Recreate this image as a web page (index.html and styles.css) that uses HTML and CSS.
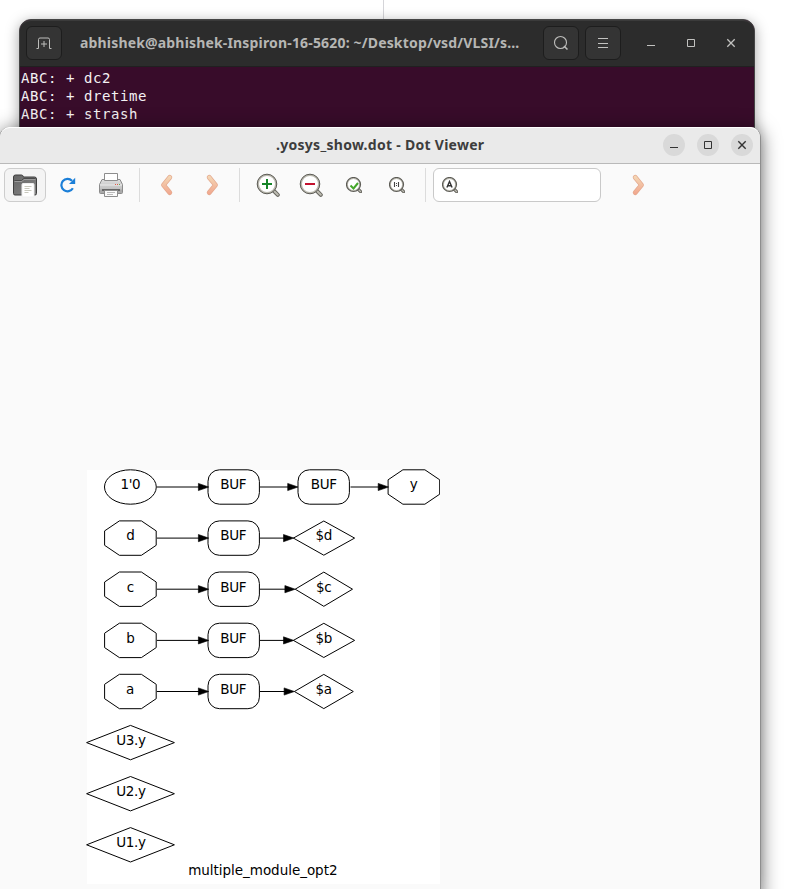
FILE: index.html
```html
<!DOCTYPE html>
<html lang="en">
<head>
<meta charset="utf-8">
<title>.yosys_show.dot - Dot Viewer</title>
<link rel="stylesheet" href="styles.css">
</head>
<body>
<div class="page-line"></div>

<section class="window terminal">
  <header class="term-header">
    <button class="term-btn" aria-label="New tab">
      <svg width="16" height="16" viewBox="0 0 16 16" fill="none" stroke="#bdbdbb"><path d="M.5 13.500h2v-9q0-1.500 1.500-1.500h8q1.500 0 1.500 1.500v9h2M8 6v6M5 9h6"/></svg>
    </button>
    <h1 class="term-title">abhishek@abhishek-Inspiron-16-5620: ~/Desktop/vsd/VLSI/s…</h1>
    <button class="term-btn" aria-label="Search">
      <svg width="16" height="16" viewBox="0 0 16 16" fill="none" stroke="#bdbdbb"><circle cx="7.500" cy="7.500" r="6" stroke-width="1.100"/><path d="M11 11l3.500 3.500" stroke-width="1.500"/></svg>
    </button>
    <button class="term-btn" aria-label="Menu">
      <svg width="16" height="16" viewBox="0 0 16 16" stroke="#c2c2c0"><path d="M3 3.500h10M3 8.500h10M3 12.500h10"/></svg>
    </button>
    <div class="term-controls">
      <svg width="16" height="16" viewBox="0 0 16 16" stroke="#c2c2c0"><path d="M4 10.500h8"/></svg>
      <svg width="16" height="16" viewBox="0 0 16 16" stroke="#c2c2c0" fill="none"><path d="M4.500 4.500h7v7h-7z"/></svg>
      <svg width="16" height="16" viewBox="0 0 16 16" stroke="#c2c2c0" stroke-width="1.300"><path d="M4.300 4.300l7.400 7.400M11.700 4.300l-7.400 7.400"/></svg>
    </div>
  </header>
  <pre class="term-output">ABC: + dc2
ABC: + dretime
ABC: + strash</pre>
</section>

<section class="window viewer">
  <header class="viewer-header">
    <h2 class="viewer-title">.yosys_show.dot - Dot Viewer</h2>
    <div class="viewer-controls">
      <span class="round"><svg width="16" height="16" viewBox="0 0 16 16" stroke="#333"><path d="M4 10.500h8"/></svg></span>
      <span class="round"><svg width="16" height="16" viewBox="0 0 16 16" stroke="#333" fill="none"><path d="M4.500 4.500h7v7h-7z"/></svg></span>
      <span class="round"><svg width="16" height="16" viewBox="0 0 16 16" stroke="#333" stroke-width="1.400"><path d="M4.300 4.300l7.400 7.400M11.700 4.300l-7.400 7.400"/></svg></span>
    </div>
  </header>

  <svg class="defs" width="0" height="0">
    <defs>
      <linearGradient id="peach" gradientUnits="userSpaceOnUse" x1="0" y1="2" x2="0" y2="22"><stop offset="0" stop-color="#f4dbb8"/><stop offset="1" stop-color="#f1a48c"/></linearGradient>
      <linearGradient id="folder" x1="0" y1="0" x2="1" y2="1"><stop offset="0" stop-color="#666"/><stop offset="1" stop-color="#858585"/></linearGradient>
      <linearGradient id="metal" x1="0" y1="0" x2="0" y2="1"><stop offset="0" stop-color="#dedede"/><stop offset="1" stop-color="#b5b5b5"/></linearGradient>
      <symbol id="right" viewBox="0 0 24 24"><path d="M9.200 4.400L15.500 12L9.200 19.600" fill="none" stroke="#e4a88d" stroke-width="4.800" stroke-linecap="round" stroke-linejoin="round"/><path d="M9.200 4.400L15.500 12L9.200 19.600" fill="none" stroke="url(#peach)" stroke-width="3.400" stroke-linecap="round" stroke-linejoin="round"/></symbol>
      <symbol id="lens-large" viewBox="0 0 24 24"><path d="M17.500 17.500l4.300 4.300" stroke="#66655e" stroke-width="4" stroke-linecap="round"/><path d="M17.500 17.500l4.300 4.300" stroke="#bdbcb2" stroke-width="2" stroke-linecap="round"/><circle cx="11" cy="11" r="9" fill="#fff" stroke="#b9b8ae" stroke-width="2"/><circle cx="11" cy="11" r="9.800" fill="none" stroke="#5d5c56" stroke-width="1"/></symbol>
      <symbol id="lens-small" viewBox="0 0 16 16"><path d="M12 12l2.600 2.600" stroke="#66655e" stroke-width="3.200" stroke-linecap="round"/><path d="M12 12l2.600 2.600" stroke="#bdbcb2" stroke-width="1.300" stroke-linecap="round"/><circle cx="7.500" cy="7.500" r="6.200" fill="#fff" stroke="#c0bfb5" stroke-width="1.300"/><circle cx="7.500" cy="7.500" r="7" fill="none" stroke="#5d5c56" stroke-width="1.200"/></symbol>
    </defs>
  </svg>

  <nav class="toolbar">
    <span class="tool raised">
      <svg width="26" height="26" viewBox="0 0 26 26"><path d="M1.500 21.500V5q0-2 2-2h6q1.500 0 2 2h11q2 0 2 2v14.500q0 1.500-1.500 1.500H3q-1.500 0-1.500-1.500z" fill="url(#folder)" stroke="#3f3f3f"/><path d="M2.500 9.500h7.500l2-2h11.500" fill="none" stroke="#9b9b9b"/><path d="M2.500 8.500h7l2-2h12" fill="none" stroke="#4b4b4b"/><path d="M11 11.500h10q1 0 1 1V25H10V12.500q0-1 1-1z" fill="#fff" stroke="#eee"/><path d="M12.500 14.500h7M12.500 16.500h5M12.500 18.500h7M12.500 20.500h4" stroke="#c8c8bd"/></svg>
    </span>
    <span class="tool">
      <svg width="16" height="16" viewBox="0 0 16 16"><path d="M12.900 11.300A6.200 6.200 0 1 1 12 3.700" fill="none" stroke="#1b7fd8" stroke-width="2.200"/><path d="M15.200.8V7H9z" fill="#1b7fd8"/></svg>
    </span>
    <span class="tool">
      <svg width="26" height="26" viewBox="0 0 26 26"><path d="M4 7.500h18l2.500 5v8q0 1-1 1h-21q-1 0-1-1v-8z" fill="url(#metal)" stroke="#8b8b8b"/><path d="M2 13h22" stroke="#ececec"/><path d="M2 17.500h22v3.500H2z" fill="#aaa"/><path d="M4 17h18v2H4z" fill="#666"/><path d="M6.500 1.500h13v7h-13z" fill="#fff" stroke="#8d8d8d"/><path d="M6.500 18.500h13v6h-13z" fill="#fafafa" stroke="#8d8d8d"/><path d="M9 20.500h8M9 22.500h6" stroke="#bbb"/><path d="M17 12.500h1M19 12.500h1" stroke="#e35b48"/><path d="M21 12.500h1" stroke="#67a94f"/></svg>
    </span>
    <i class="sep first"></i>
    <span class="tool"><svg class="flip" width="24" height="24"><use href="#right"/></svg></span>
    <span class="tool next"><svg width="24" height="24"><use href="#right"/></svg></span>
    <i class="sep second"></i>
    <span class="tool"><svg width="24" height="24" viewBox="0 0 24 24"><use href="#lens-large"/><path d="M6 11h10M11 6v10" stroke="#168529" stroke-width="2"/></svg></span>
    <span class="tool"><svg width="24" height="24" viewBox="0 0 24 24"><use href="#lens-large"/><path d="M6 11h10" stroke="#c4122f" stroke-width="2"/></svg></span>
    <span class="tool"><svg width="16" height="16" viewBox="0 0 16 16"><use href="#lens-small"/><path d="M4.500 8.500l3 3L12 6" fill="none" stroke="#45a82b" stroke-width="2"/></svg></span>
    <span class="tool"><svg width="16" height="16" viewBox="0 0 16 16"><use href="#lens-small"/><path d="M5.500 5v5M9.500 5v5" stroke="#444" stroke-width="1.100"/><path d="M7 6h1v1H7zM7 8h1v1H7z" fill="#444"/></svg></span>
    <i class="sep third"></i>
    <label class="entry">
      <svg width="16" height="16" viewBox="0 0 16 16"><use href="#lens-small"/><path d="M4.900 10.500L7.500 4.500 10.100 10.500M5.900 8.700h3.200" fill="none" stroke="#333" stroke-width="1.400"/></svg>
    </label>
    <span class="tool last"><svg width="24" height="24"><use href="#right"/></svg></span>
  </nav>

  <main class="canvas">
    <svg class="graph" width="354" height="416" viewBox="86 469 354 416">
      <defs>
        <path id="oct" d="M-11-17.200H11L25.800-7.200V7.200L11 17.200H-11L-25.800 7.200V-7.200z"/>
        <rect id="box" x="-25.700" y="-17.200" width="51.400" height="34.400" rx="11.500"/>
        <path id="wide" d="M-43.900 0L0-17.200 43.900 0 0 17.200z"/>
        <path id="tip" d="M0 0L-10.300-3.600V3.600z" fill="#000" stroke-width=".6"/>
        <g id="feed"><path d="M26.500 0H69"/><use href="#tip" x="78.300"/><use href="#box" x="103.300"/></g>
      </defs>
      <path class="paper" d="M87 470h353v414H87z"/>
      <g class="shape">
        <ellipse cx="130.400" cy="487" rx="25.900" ry="17.200"/>
        <use href="#feed" x="130.400" y="487"/>
        <path d="M260 487h29M350.500 487H379"/>
        <use href="#tip" x="298" y="487"/><use href="#box" x="323.700" y="487"/>
        <use href="#tip" x="388.500" y="487"/><use href="#oct" x="413.900" y="487"/>

        <use href="#oct" x="130.400" y="538.100"/><use href="#feed" x="130.400" y="538.100"/>
        <path d="M260 538.100h25M293.400 538.100L323.800 521l30.800 17.100-30.800 17.100z"/><use href="#tip" x="293.800" y="538.100"/>

        <use href="#oct" x="130.400" y="589.200"/><use href="#feed" x="130.400" y="589.200"/>
        <path d="M260 589.200h26M295.200 589.200L323.800 572.100l28.700 17.100-28.700 17.100z"/><use href="#tip" x="295.200" y="589.200"/>

        <use href="#oct" x="130.400" y="640.400"/><use href="#feed" x="130.400" y="640.400"/>
        <path d="M260 640.400h25M293.400 640.400L323.800 623.300l30.800 17.100-30.800 17.100z"/><use href="#tip" x="293.800" y="640.400"/>

        <use href="#oct" x="130.400" y="691.500"/><use href="#feed" x="130.400" y="691.500"/>
        <path d="M260 691.500h25M294.400 691.500L323.800 674.400l29.500 17.100-29.500 17.100z"/><use href="#tip" x="294.400" y="691.500"/>

        <use href="#wide" x="130.500" y="742.600"/>
        <use href="#wide" x="130.500" y="793.700"/>
        <use href="#wide" x="130.500" y="844.800"/>
      </g>
      <g class="label">
        <text x="130.400" y="489">1'0</text><text x="233.300" y="489">BUF</text><text x="323.700" y="489">BUF</text><text x="413.700" y="489">y</text>
        <text x="130.300" y="540">d</text><text x="233.300" y="540">BUF</text><text x="323.700" y="540">$d</text>
        <text x="130.300" y="592">c</text><text x="233.300" y="592">BUF</text><text x="323.700" y="592">$c</text>
        <text x="130.300" y="643">b</text><text x="233.300" y="643">BUF</text><text x="323.700" y="643">$b</text>
        <text x="130" y="694">a</text><text x="233.300" y="694">BUF</text><text x="323.700" y="694">$a</text>
        <text x="131" y="745">U3.y</text>
        <text x="131" y="796">U2.y</text>
        <text x="131" y="847">U1.y</text>
        <text x="262.700" y="875" textLength="149">multiple_module_opt2</text>
      </g>
    </svg>
  </main>
</section>
</body>
</html>
```
FILE: styles.css
```css
* { box-sizing: border-box; }

body {
  margin: 0;
  width: 796px;
  height: 889px;
  position: relative;
  overflow: hidden;
  background: #fff;
  font-family: "Noto Sans", "Open Sans", sans-serif;
}

svg { display: block; flex: none; }

h1, h2 { margin: 0; font-size: 14px; font-weight: 700; white-space: nowrap; }

.page-line {
  position: absolute;
  left: 383px;
  top: 0;
  width: 1px;
  height: 20px;
  background: #d5d5d9;
}

.window { position: absolute; overflow: visible; }

.terminal {
  left: 19px;
  top: 19px;
  width: 736px;
  height: 860px;
  border: 1px solid #454545;
  border-radius: 12px 12px 0 0;
  background: #380c2a;
  box-shadow: 0 3px 14px rgba(0, 0, 0, .36);
}

.term-header {
  display: flex;
  align-items: center;
  height: 47px;
  padding: 0 6px 1px;
  border-top: 1px solid #3b3b3b;
  border-bottom: 1px solid #202020;
  border-radius: 11px 11px 0 0;
  background: #2c2c2c;
}

.term-btn {
  display: flex;
  align-items: center;
  justify-content: center;
  flex: none;
  width: 36px;
  height: 34px;
  padding: 0;
  border: 1px solid #1d1d1d;
  border-radius: 6px;
  background: #343434;
}

.term-btn + .term-btn { margin-left: 6px; }

.term-title {
  width: 463px;
  margin: 0 0 1px 18px;
  color: #b6b6b4;
  letter-spacing: .17px;
}

.term-controls { display: flex; gap: 24px; margin-left: 22px; }

.term-output {
  margin: 0;
  padding: 2px 0 0 1px;
  color: #f4f1f3;
  font: 14px/18px "DejaVu Sans Mono", monospace;
  letter-spacing: .57px;
}

.viewer {
  left: -1px;
  top: 127px;
  width: 762px;
  height: 800px;
  border: 1px solid #8e8e8e;
  border-top: 0;
  border-radius: 11px 11px 0 0;
  background: #fafafa;
  box-shadow: 0 3px 18px 1px rgba(0, 0, 0, .5);
}

.viewer-header {
  display: flex;
  align-items: center;
  justify-content: flex-end;
  height: 37px;
  padding: 0 7px 1px 0;
  border-top: 1px solid #fff;
  border-bottom: 1px solid #b9b9b9;
  border-radius: 10px 10px 0 0;
  background: #eaeaea;
}

.viewer-title {
  width: 208px;
  margin: 0 179px 1px 0;
  color: #3d3d3d;
  letter-spacing: .28px;
}

.viewer-controls { display: flex; gap: 12px; }

.round {
  display: flex;
  align-items: center;
  justify-content: center;
  width: 22px;
  height: 22px;
  border-radius: 50%;
  background: #d9d9d9;
}

.defs { position: absolute; }

.toolbar { display: flex; align-items: center; height: 42px; padding: 0 4px; }

.tool {
  display: flex;
  align-items: center;
  justify-content: center;
  flex: none;
  width: 42px;
  height: 34px;
}

.tool + .tool { margin-left: 1px; }
.tool + .tool.next { margin-left: 3px; }
.tool.last { margin-left: 16px; }

.raised { border: 1px solid #cdcdcd; border-radius: 6px; background: #f4f4f4; }

.flip { transform: scaleX(-1); }

.sep { flex: none; width: 1px; height: 34px; background: #dcdcdc; }
.first { margin: 0 6px 0 7px; }
.second { margin: 0 7px 0 6px; }
.third { margin: 0 7px; }

.entry {
  display: flex;
  align-items: center;
  width: 168px;
  height: 34px;
  padding-left: 8px;
  border: 1px solid #c9c9c9;
  border-radius: 6px;
  background: #fff;
}

.canvas { padding: 263px 0 0 86px; }

.paper { fill: #fff; }
.shape { fill: none; stroke: #000; stroke-width: 1; }
.label {
  font: 13.5px "DejaVu Sans", sans-serif;
  letter-spacing: -.3px;
  text-anchor: middle;
  fill: #000;
}
```
